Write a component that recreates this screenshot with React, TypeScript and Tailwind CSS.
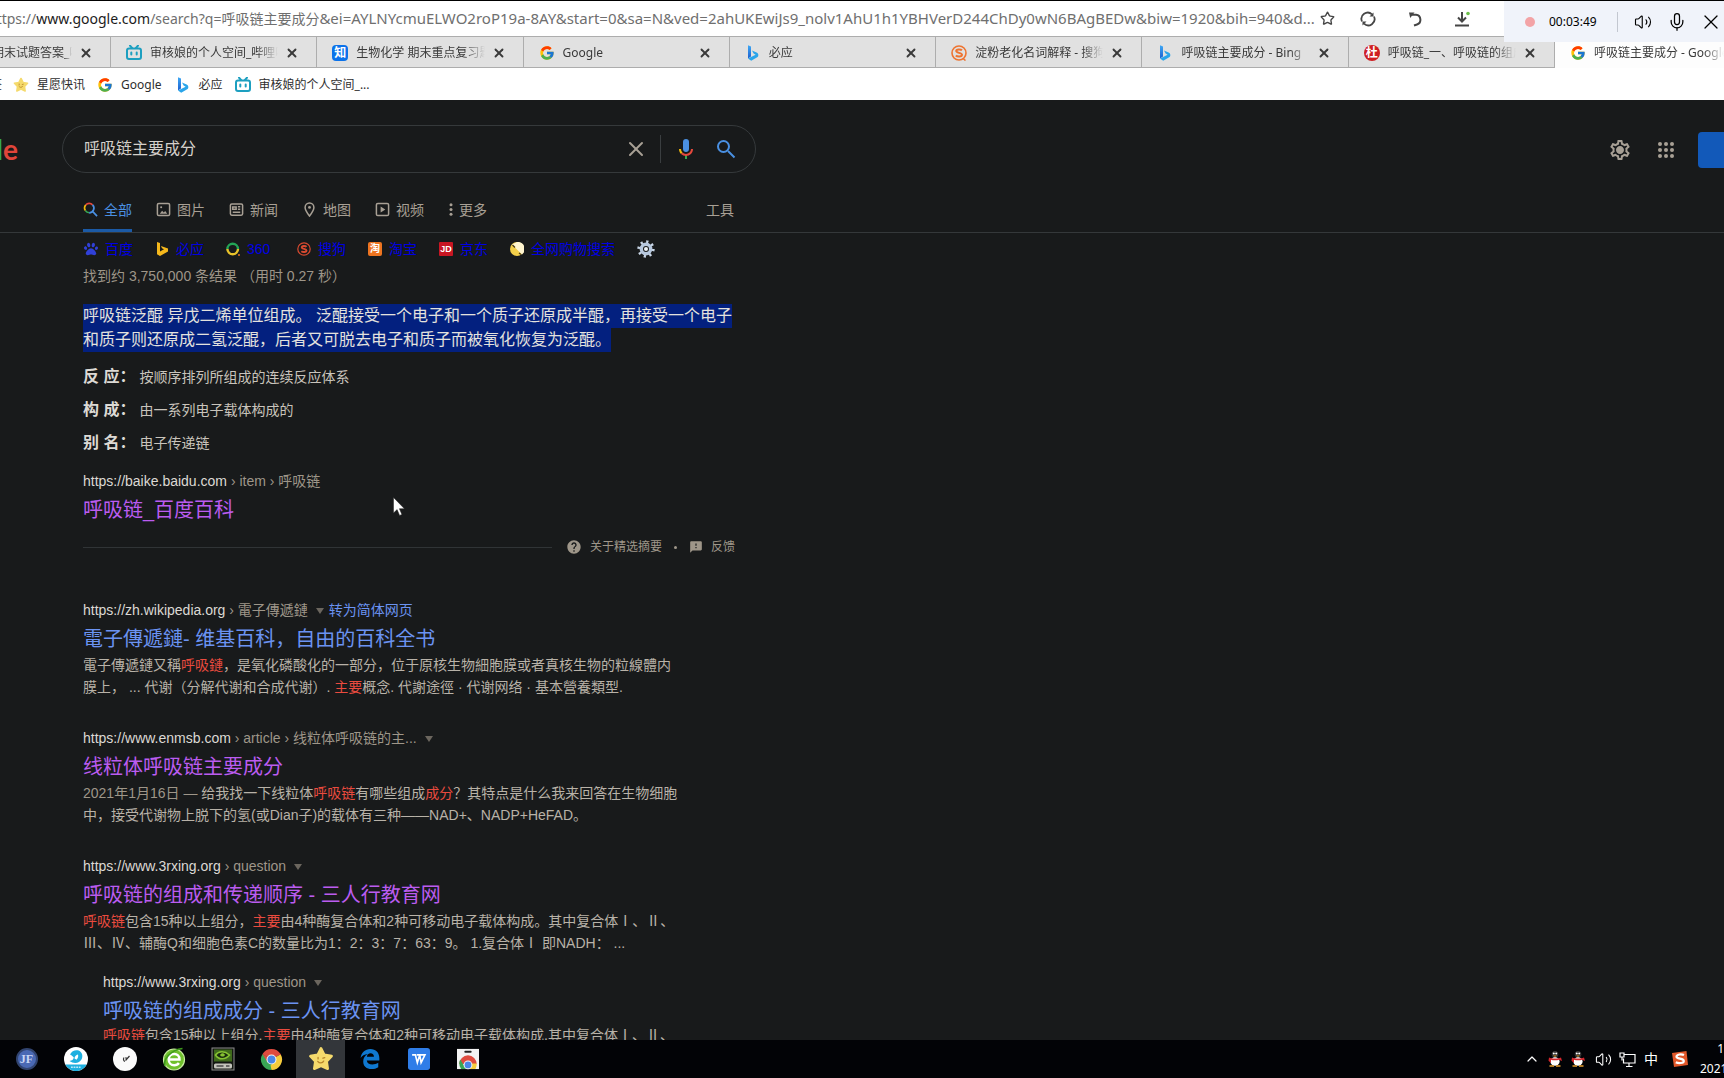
import React from 'react';
import { X, Mic, Volume2, Star, ChevronUp } from 'lucide-react';
import { FcGoogle } from 'react-icons/fc';
import { MdOutlineSettings, MdHelp, MdFeedback } from 'react-icons/md';
import { FaPaw } from 'react-icons/fa';

function BiliIcon() {
  return (
    <svg viewBox="0 0 16 16" className="size-4 shrink-0" fill="none" stroke="#1d9fc0" strokeWidth="2" aria-hidden="true">
      <rect x="1" y="3.6" width="14" height="10.4" rx="2" />
      <path d="M4 .6 6 3M12 .6 10 3" strokeLinecap="round" />
      <path d="M5.3 7.4v2.2M10.7 7.4v2.2" strokeLinecap="round" />
    </svg>
  );
}

function BingIcon() {
  return (
    <svg viewBox="0 0 16 16" className="size-4 shrink-0" aria-hidden="true">
      <defs>
        <linearGradient id="bingBlue" x1="0" y1="0" x2="0" y2="1">
          <stop offset="0" stopColor="#3fa9f5" />
          <stop offset="1" stopColor="#1b5fd0" />
        </linearGradient>
      </defs>
      <path d="M3 .3 6 1.500v10L3 13.600z" fill="url(#bingBlue)" />
      <path d="M3 13.400 6.200 15.700 12.600 12C14 10.600 13.400 8 11.600 7.400L7 5.400l1.600 3.200 2 1.100z" fill="#2aa5ea" />
    </svg>
  );
}

function ZhihuIcon() {
  return <span className="flex size-4 shrink-0 items-center justify-center rounded-sm bg-[#0b72ea] text-xs font-bold text-white">知</span>;
}

function SogouTabIcon() {
  return (
    <svg viewBox="0 0 16 16" className="size-4 shrink-0" fill="none" stroke="#ee7431" aria-hidden="true">
      <circle cx="8" cy="8" r="7" strokeWidth="1.600" />
      <path d="M11 5.300C9.800 4.200 5.200 4 5.200 6.100c0 2.200 5.800 1.300 5.800 3.700 0 2.200-4.800 2-6.200.7" strokeWidth="2" />
      <path d="M12 13.500l2.500 2" strokeWidth="1.600" />
    </svg>
  );
}

function DuIcon() {
  return <span className="flex size-4 shrink-0 items-center justify-center rounded-full bg-[#cf1f22] text-xs font-bold text-white">杜</span>;
}

function StarFace({ className }: { className: string }) {
  return (
    <svg viewBox="0 0 24 24" className={className} aria-hidden="true">
      <path
        d="M12 2.200 15 8.200 21.800 9.300 17.200 14.200 18.200 21 12 18.200 5.800 21 6.800 14.200 2.200 9.300 9 8.200z"
        fill="#f5da6c"
        stroke="#f5da6c"
        strokeWidth="2.400"
        strokeLinejoin="round"
      />
      <path d="M9.300 10.500v1.400M13.800 11.300l1.700-.5M9 14.200c1.500 2 4.500 2 5.500-.3" fill="none" stroke="#b8862a" strokeWidth="1.200" strokeLinecap="round" />
    </svg>
  );
}

const tabs = [
  { title: '审核娘的个人空间_哔哩哔', icon: <BiliIcon /> },
  { title: '生物化学 期末重点复习题', icon: <ZhihuIcon /> },
  { title: 'Google', icon: <FcGoogle className="size-4 shrink-0" /> },
  { title: '必应', icon: <BingIcon /> },
  { title: '淀粉老化名词解释 - 搜狗', icon: <SogouTabIcon /> },
  { title: '呼吸链主要成分 - Bing', icon: <BingIcon /> },
  { title: '呼吸链_一、呼吸链的组成', icon: <DuIcon /> },
];

function AddressBar() {
  return (
    <div className="flex h-9 shrink-0 items-center border-t border-black bg-white text-sm text-[#6f6f6f]">
      <div className="w-[1316px] shrink-0 overflow-hidden whitespace-nowrap">
        <span className="-ml-3">
          https://<span className="text-[#1c1c1c]">www.google.com</span>
          /search?q=呼吸链主要成分
          <span className="text-[15px]">
            &amp;ei=AYLNYcmuELWO2roP19a-8AY&amp;start=0&amp;sa=N&amp;ved=2ahUKEwiJs9_nolv1AhU1h1YBHVerD244ChDy0wN6BAgBEDw&amp;biw=1920&amp;bih=940&amp;d...
          </span>
        </span>
      </div>
      <div className="ml-1 flex items-center gap-[25px] text-[#454545]">
        <button aria-label="收藏"><Star className="size-[15px]" strokeWidth={2.2} /></button>
        <button aria-label="刷新">
          <svg viewBox="0 0 16 16" className="size-4" fill="none" stroke="currentColor" strokeWidth="1.800" aria-hidden="true">
            <path d="M2 10.500A6.300 6.300 0 0 1 12 3.300M14 5.500A6.300 6.300 0 0 1 4 12.700" />
            <path d="M13.500 1.500v4h-4zM2.500 14.500v-4h4z" fill="currentColor" stroke="none" />
          </svg>
        </button>
        <button aria-label="撤销" className="ml-1.5">
          <svg viewBox="0 0 16 16" className="size-4" fill="none" stroke="currentColor" strokeWidth="2" aria-hidden="true">
            <path d="M4.500 3.800H9a5 5 0 0 1 1 9.700L7 14.500" />
            <path d="M2 1.500h5.500L3.200 7z" fill="currentColor" stroke="none" />
          </svg>
        </button>
        <button aria-label="下载" className="ml-1.5">
          <svg viewBox="0 0 16 16" className="size-4" fill="none" stroke="currentColor" strokeWidth="2" aria-hidden="true">
            <path d="M8 1v9M4 6.500l4 4 4-4M1 14.500h14" />
            <circle cx="14" cy="2.500" r="1.800" fill="#6cc04a" stroke="none" />
          </svg>
        </button>
      </div>
    </div>
  );
}

function CloseTab() {
  return (
    <button aria-label="关闭标签页" className="ml-[7px]">
      <X className="size-3.5" strokeWidth={3.2} />
    </button>
  );
}

function TabStrip() {
  return (
    <div className="flex h-8 shrink-0 overflow-hidden bg-[#fdfdfd] text-xs text-[#3a3a3a]">
      <div className="flex w-[111px] shrink-0 items-center border-y border-r border-[#adadad] bg-[#e1e1e1] pt-0.5">
        <span className="-ml-2 w-20 shrink-0 overflow-hidden whitespace-nowrap [mask-image:linear-gradient(to_right,black_90%,transparent)]">
          期末试题答案_哔
        </span>
        <CloseTab />
      </div>
      <div className="flex w-[1444px] shrink-0">
        {tabs.map((tab) => (
          <div key={tab.title} className="flex min-w-0 flex-1 items-center border-y border-r border-[#adadad] bg-[#e1e1e1] pt-0.5 pr-[17px] pl-[15px]">
            {tab.icon}
            <span className="ml-2 min-w-0 flex-1 overflow-hidden whitespace-nowrap [mask-image:linear-gradient(to_right,black_84%,transparent)]">
              {tab.title}
            </span>
            <CloseTab />
          </div>
        ))}
      </div>
      <div className="flex min-w-0 flex-1 items-center bg-[#fdfdfd] pt-0.5 pl-[15px]">
        <FcGoogle className="size-4 shrink-0" />
        <span className="ml-2 overflow-hidden whitespace-nowrap [mask-image:linear-gradient(to_right,black_84%,transparent)]">
          呼吸链主要成分 - Google 搜索
        </span>
      </div>
    </div>
  );
}

function Bookmarks() {
  return (
    <nav aria-label="书签" className="flex h-8 shrink-0 items-center overflow-hidden bg-white pt-0.5 text-xs text-[#2e2e2e]">
      <span className="flex w-0.5 shrink-0 justify-end overflow-hidden">签</span>
      <a href="#" className="ml-[11px] flex items-center gap-2"><StarFace className="size-4" />星愿快讯</a>
      <a href="#" className="ml-3 flex items-center gap-2"><FcGoogle className="size-4" />Google</a>
      <a href="#" className="ml-[13px] flex items-center gap-2"><BingIcon />必应</a>
      <a href="#" className="ml-3 flex items-center gap-2"><BiliIcon />审核娘的个人空间_...</a>
    </nav>
  );
}

function Recorder() {
  return (
    <div className="absolute top-px right-0 flex h-[41px] w-[220px] items-center bg-[#f0f3fa] text-black">
      <span className="ml-[21px] size-2.5 rounded-full bg-[#f3a3a6]" />
      <span className="ml-3.5 w-12 text-xs">00:03:49</span>
      <span className="ml-5 h-5 w-px bg-[#c3c7d0]" />
      <button aria-label="声音" className="ml-4"><Volume2 className="size-[18px]" strokeWidth={1.5} /></button>
      <button aria-label="麦克风" className="ml-[15px]"><Mic className="size-5" strokeWidth={1.5} /></button>
      <button aria-label="关闭" className="ml-3"><X className="size-6" strokeWidth={1.2} /></button>
    </div>
  );
}

function SearchHeader() {
  return (
    <header className="flex items-center pt-[25px]">
      <div className="w-[62px] shrink-0">
        <a href="#" aria-label="Google" className="flex w-[18px] justify-end overflow-hidden font-['Lato',sans-serif] text-[28px] leading-9 font-bold">
          <span className="text-[#36a853]">l</span>
          <span className="text-[#e0453a]">e</span>
        </a>
      </div>
      <form className="flex h-12 w-[694px] items-center rounded-full border border-[#35393b] pr-[17px] pl-[21px]">
        <input aria-label="搜索" defaultValue="呼吸链主要成分" className="min-w-0 flex-1 bg-transparent text-base text-[#d4d0ca] outline-none" />
        <button type="button" aria-label="清除"><X className="size-6 text-[#a8a095]" strokeWidth={2} /></button>
        <span className="mr-[13px] ml-3 h-7 w-px bg-[#3a3e40]" />
        <button type="button" aria-label="语音搜索">
          <svg viewBox="0 0 24 24" className="size-6" aria-hidden="true">
            <path d="M12 15c1.700 0 3-1.300 3-3V5a3 3 0 0 0-6 0v7c0 1.700 1.300 3 3 3z" fill="#4a90e2" />
            <path d="M11 18.100h2V22h-2z" fill="#35a853" />
            <path d="M7 12H5c0 1.900.8 3.700 2 5l1.500-1.400A5 5 0 0 1 7 12z" fill="#f0b90b" />
            <path d="M12 17a5 5 0 0 1-3.500-1.400L7 17a7 7 0 0 0 5 2c3.900 0 7-3.100 7-7h-2a5 5 0 0 1-5 5z" fill="#e5483c" />
          </svg>
        </button>
        <button type="button" aria-label="Google 搜索" className="ml-4">
          <svg viewBox="0 0 24 24" className="size-6" aria-hidden="true" fill="none" stroke="#4a90e2" strokeWidth="2">
            <circle cx="9.500" cy="9.500" r="5.500" />
            <path d="m14 14 6.500 6.500" />
          </svg>
        </button>
      </form>
      <div className="ml-auto flex items-center pt-0.5 text-[#a8a095]">
        <button aria-label="设置" className="grid place-items-center">
          <MdOutlineSettings className="col-start-1 row-start-1 size-6" />
          <span className="col-start-1 row-start-1 size-1.5 rounded-full bg-[#a8a095]" />
        </button>
        <button aria-label="Google 应用" className="ml-[26px] grid grid-cols-3 gap-0.5">
          {Array.from({ length: 9 }, (_, i) => (
            <span key={i} className="size-1 rounded-full bg-[#a8a095]" />
          ))}
        </button>
        <button aria-label="登录" className="ml-6 h-9 w-[26px] rounded-l bg-[#1259b9]" />
      </div>
    </header>
  );
}

const line = { fill: 'none', stroke: 'currentColor', strokeWidth: 1.6 } as const;

function Categories() {
  const item = 'flex h-11 items-center gap-1.5 border-b-[3px] border-transparent pt-0.5';
  return (
    <div className="border-b border-[#34383a] pt-[15px] pl-[83px]">
      <div className="flex w-[651px] items-center gap-6 text-sm text-[#a8a095]">
        <a href="#" className="flex h-11 items-center gap-1.5 border-b-[3px] border-[#1b5aa6] pt-0.5 text-[#4a90e2]">
          <svg viewBox="0 0 16 16" className="size-[15px]" fill="none" strokeWidth="1.800" aria-hidden="true">
            <path d="M2.600 9.200A5 5 0 0 1 3 3.100" stroke="#f0b90b" />
            <path d="M3 3.100A5 5 0 0 1 10.200 3" stroke="#e5483c" />
            <path d="M2.600 9.200a5 5 0 0 0 4 2.300" stroke="#35a853" />
            <path d="M10.200 3a5 5 0 0 1-3.600 8.500M10.200 10l4.800 5" stroke="#4a90e2" />
          </svg>
          全部
        </a>
        <a href="#" className={item}>
          <svg viewBox="0 0 16 16" className="size-[15px]" {...line} aria-hidden="true">
            <rect x="1.500" y="1.500" width="13" height="13" rx="1.500" />
            <path d="M4 12.500l2.500-3.300 1.800 2 1.500-1.500 2.200 2.800z" fill="currentColor" stroke="none" />
            <circle cx="5.500" cy="5.500" r="1.100" fill="currentColor" stroke="none" />
          </svg>
          图片
        </a>
        <a href="#" className={item}>
          <svg viewBox="0 0 16 16" className="size-[15px]" {...line} aria-hidden="true">
            <rect x="1.500" y="2" width="13" height="12" rx="1.500" />
            <path d="M4 5.200h3.600v2.600H4zM9.500 5h2.500M9.500 7.800H12M4 10.800h8" />
          </svg>
          新闻
        </a>
        <a href="#" className={item}>
          <svg viewBox="0 0 16 16" className="size-[15px]" {...line} aria-hidden="true">
            <path d="M8 15C5 11 3.300 8.500 3.300 5.800a4.700 4.700 0 0 1 9.400 0C12.700 8.500 11 11 8 15z" />
            <circle cx="8" cy="5.800" r="1.500" fill="currentColor" stroke="none" />
          </svg>
          地图
        </a>
        <a href="#" className={item}>
          <svg viewBox="0 0 16 16" className="size-[15px]" {...line} aria-hidden="true">
            <rect x="1.500" y="1.500" width="13" height="13" rx="1.500" />
            <path d="M6 4.800v6.400L11 8z" fill="currentColor" stroke="none" />
          </svg>
          视频
        </a>
        <button className="flex h-11 items-center gap-1.5 border-b-[3px] border-transparent pt-0.5 pl-px">
          <svg viewBox="0 0 4 16" className="h-[15px] w-1" fill="currentColor" aria-hidden="true">
            <circle cx="2" cy="3" r="1.600" /><circle cx="2" cy="8" r="1.600" /><circle cx="2" cy="13" r="1.600" />
          </svg>
          更多
        </button>
        <button className="ml-auto h-11 border-b-[3px] border-transparent pt-0.5">工具</button>
      </div>
    </div>
  );
}

const engines = [
  {
    name: '百度',
    icon: <FaPaw className="size-3.5 text-[#3040d8]" />,
  },
  {
    name: '必应',
    icon: <svg viewBox="0 0 14 14" className="size-3.5" aria-hidden="true"><path d="M2 0l3 1v8.500L9 7.300 7 6.300 6 4l7 2.600v3L5 14l-3-1.800z" fill="#f5b81c" /></svg>,
  },
  {
    name: '360',
    icon: (
      <svg viewBox="0 0 14 14" className="size-3.5" fill="none" strokeWidth="2.400" aria-hidden="true">
        <path d="M1.400 7a5.300 5.300 0 0 1 10.600 0" stroke="#23a455" /><path d="M12 7A5.300 5.300 0 0 1 1.400 7" stroke="#e8c22a" /><circle cx="13" cy="13" r=".9" fill="#f08020" stroke="none" />
      </svg>
    ),
  },
  {
    name: '搜狗',
    icon: (
      <svg viewBox="0 0 14 14" className="size-3.5" fill="none" stroke="#d94a30" aria-hidden="true">
        <circle cx="7" cy="7" r="6.200" strokeWidth="1.200" /><path d="M9.500 4.800C8.500 3.600 4.800 3.600 4.800 5.400c0 1.900 4.700 1.200 4.700 3.200 0 1.800-3.800 1.800-5.200.6" strokeWidth="1.900" />
      </svg>
    ),
  },
  { name: '淘宝', icon: <span className="flex size-3.5 items-center justify-center rounded-[2px] bg-[#ee7420] text-[10px] font-bold text-white">淘</span> },
  { name: '京东', icon: <span className="flex size-3.5 items-center justify-center rounded-[1px] bg-[#c81623] text-[9px] font-bold text-white">JD</span> },
  {
    name: '全网购物搜索',
    icon: <svg viewBox="0 0 14 14" className="size-3.5" aria-hidden="true"><circle cx="7" cy="7" r="7" fill="#f3cf4a" /><path d="M2 2.500 12 12.500A7 7 0 0 0 7 0z" fill="#fff5cf" /><path d="M2.500 3 5 5.500M9 11l2 1.500" stroke="#4a3a10" strokeWidth="1.300" /></svg>,
  },
];

function Engines() {
  return (
    <div className="flex h-8 items-center gap-[22px] pl-px text-sm text-[#0000e4]">
      {engines.map((e) => (
        <a key={e.name} href="#" className="flex min-w-[49px] items-center gap-[7px]">{e.icon}{e.name}</a>
      ))}
      <button aria-label="搜索引擎设置">
        <svg viewBox="0 0 18 18" className="size-[18px]" aria-hidden="true">
          <circle cx="9" cy="9" r="7.200" fill="none" stroke="#c9d6e6" strokeWidth="3" strokeDasharray="2.200 3.450" />
          <circle cx="9" cy="9" r="4.700" fill="none" stroke="#b7c8de" strokeWidth="3.400" />
          <circle cx="9" cy="9" r="2" fill="#eef3f8" />
        </svg>
      </button>
    </div>
  );
}

function Caret() {
  return (
    <svg viewBox="0 0 8 6" className="ml-2 inline-block h-1.5 w-2 align-middle" fill="#6b665e" aria-hidden="true"><path d="M0 0h8L4 6z" /></svg>
  );
}

function Cite({ host, path, children }: { host: string; path: string; children?: React.ReactNode }) {
  return (
    <div className="text-sm leading-5 whitespace-nowrap text-[#9e9689]">
      <span className="text-[#dcd9d4]">{host}</span> {path}
      {children}
    </div>
  );
}

function Title({ visited, children }: { visited?: boolean; children: React.ReactNode }) {
  return (
    <h3 className={visited ? 'mt-1.5 text-xl leading-[26px] whitespace-nowrap text-[#bb5cf0]' : 'mt-1.5 text-xl leading-[26px] whitespace-nowrap text-[#6b93f2]'}>
      <a href="#">{children}</a>
    </h3>
  );
}

const Hit = ({ children }: { children: string }) => <em className="text-[#e94b3f] not-italic">{children}</em>;

const facts = [
  ['反 应：', '按顺序排列所组成的连续反应体系'],
  ['构 成：', '由一系列电子载体构成的'],
  ['别 名：', '电子传递链'],
];

function Results() {
  const desc = 'mt-0.5 text-sm leading-[22px] whitespace-nowrap text-[#b8b2a8]';
  return (
    <div className="ml-[83px] w-[652px]">
      <Engines />
      <p className="text-sm leading-[22px] text-[#9e9689]">找到约 3,750,000 条结果 （用时 0.27 秒）</p>

      <section>
        <p className="mt-[17px] text-base leading-6 whitespace-nowrap text-[#e4e2de]">
          <span className="inline-block bg-[#03207f]">呼吸链泛醌 异戊二烯单位组成。 泛醌接受一个电子和一个质子还原成半醌，再接受一个电子</span>
          <br />
          <span className="inline-block bg-[#03207f]">和质子则还原成二氢泛醌，后者又可脱去电子和质子而被氧化恢复为泛醌。</span>
        </p>
        <dl className="mt-2">
          {facts.map(([k, v]) => (
            <div key={k} className="flex h-[33px] items-center gap-1">
              <dt className="text-base font-bold text-[#dcd9d4]">{k}</dt>
              <dd className="text-sm text-[#c9c4bc]">{v}</dd>
            </div>
          ))}
        </dl>
        <div className="mt-3">
          <Cite host="https://baike.baidu.com" path="› item › 呼吸链" />
          <Title visited>呼吸链_百度百科</Title>
        </div>
        <div className="mt-3.5 flex h-5 items-center text-xs text-[#9e9689]">
          <span className="mr-3.5 h-px flex-1 bg-[#303436]" />
          <a href="#" className="flex items-center gap-2"><MdHelp className="size-4" />关于精选摘要</a>
          <span className="mx-3 size-[3px] rounded-full bg-[#9e9689]" />
          <a href="#" className="flex items-center gap-2"><MdFeedback className="size-3.5" />反馈</a>
        </div>
      </section>

      <div className="mt-[43px] flex flex-col gap-[30px]">
        <article>
          <Cite host="https://zh.wikipedia.org" path="› 電子傳遞鏈">
            <Caret />
            <a href="#" className="ml-[5px] text-[#6b93f2]">转为简体网页</a>
          </Cite>
          <Title>電子傳遞鏈- 维基百科，自由的百科全书</Title>
          <p className={desc}>
            電子傳遞鏈又稱<Hit>呼吸鏈</Hit>，是氧化磷酸化的一部分，位于原核生物細胞膜或者真核生物的粒線體内
            <br />
            膜上， ... 代谢（分解代谢和合成代谢）. <Hit>主要</Hit>概念. 代謝途徑 · 代谢网络 · 基本營養類型.
          </p>
        </article>
        <article>
          <Cite host="https://www.enmsb.com" path="› article › 线粒体呼吸链的主..."><Caret /></Cite>
          <Title visited>线粒体呼吸链主要成分</Title>
          <p className={desc}>
            <span className="text-[#9e9689]">2021年1月16日 — </span>
            给我找一下线粒体<Hit>呼吸链</Hit>有哪些组成<Hit>成分</Hit>？其特点是什么我来回答在生物细胞
            <br />
            中，接受代谢物上脱下的氢(或Dian子)的载体有三种——NAD+、NADP+HeFAD。
          </p>
        </article>
        <article>
          <Cite host="https://www.3rxing.org" path="› question"><Caret /></Cite>
          <Title visited>呼吸链的组成和传递顺序 - 三人行教育网</Title>
          <p className={desc}>
            <Hit>呼吸链</Hit>包含15种以上组分，<Hit>主要</Hit>由4种酶复合体和2种可移动电子载体构成。其中复合体Ⅰ、Ⅱ、
            <br />
            Ⅲ、Ⅳ、辅酶Q和细胞色素C的数量比为1：2：3：7：63：9。 1.复合体Ⅰ 即NADH： ...
          </p>
        </article>
      </div>
      <article className="mt-[18px] ml-5">
        <Cite host="https://www.3rxing.org" path="› question"><Caret /></Cite>
        <Title>呼吸链的组成成分 - 三人行教育网</Title>
        <p className="text-sm leading-[22px] whitespace-nowrap text-[#b8b2a8]">
          <Hit>呼吸链</Hit>包含15种以上组分,<Hit>主要</Hit>由4种酶复合体和2种可移动电子载体构成.其中复合体Ⅰ、Ⅱ、
        </p>
      </article>
    </div>
  );
}

function ChromeIcon({ className }: { className: string }) {
  return (
    <svg viewBox="0 0 24 24" className={className} aria-hidden="true">
      <path d="M12 12 2.470 6.500A11 11 0 0 1 21.530 6.500z" fill="#df4b3f" />
      <path d="M12 12 21.530 6.500A11 11 0 0 1 12 23z" fill="#f6cc3d" />
      <path d="M12 12V23A11 11 0 0 1 2.470 6.500z" fill="#3aa655" />
      <path d="M12 7h9.800l-.4-.9H12zM7.700 14.500 2.600 6.300 12 12z" fill="#df4b3f" />
      <path d="M16.300 14.500 12 23l-1-5z" fill="#f6cc3d" />
      <circle cx="12" cy="12" r="5.200" fill="#f4f4f4" />
      <circle cx="12" cy="12" r="4.100" fill="#4a86e8" />
    </svg>
  );
}

const apps = [
  {
    name: 'JF',
    icon: <span className="flex size-[22px] items-center justify-center rounded-full border-2 border-[#31446f] bg-[#4a69b4] font-['Liberation_Serif',serif] text-xs font-bold text-[#c9d6f5]">JF</span>,
  },
  {
    name: '鸟',
    icon: (
      <svg viewBox="0 0 24 24" className="size-6" aria-hidden="true">
        <circle cx="12" cy="12" r="12" fill="#fff" />
        <path d="M6 7.500C8 3.200 13.500 2 16.500 4.800c3.200 3 2 8.200-1.500 10.200-2.600 1.400-6.500 1.200-9.500-1 2.500-.3 4-1.500 4.300-3.500C8.500 9 7.500 8.200 6 7.500z" fill="#1eb0e0" />
        <path d="M10.500 11.500c0-2 1.500-3.500 3.500-4 .5 1.500 0 4-1.500 5.200z" fill="#fff" />
        <path d="M1.500 17.500h21C20.500 21.500 16.500 24 12 24S3.500 21.500 1.500 17.500z" fill="#1eb0e0" />
        <path d="M7 20.300h10" stroke="#b9e9f7" strokeWidth="1.500" strokeDasharray="1.800 .8" />
      </svg>
    ),
  },
  {
    name: '工具',
    icon: (
      <svg viewBox="0 0 24 24" className="size-6" aria-hidden="true">
        <circle cx="12" cy="12" r="12" fill="#fafafa" />
        <path d="M11 10.500c-1 1.500-.5 3.500 1 4M12.500 13.500 16.500 9M12 11h2" stroke="#333" strokeWidth="1.200" fill="none" />
      </svg>
    ),
  },
  {
    name: '浏览器',
    icon: (
      <svg viewBox="0 0 24 24" className="size-6" aria-hidden="true">
        <circle cx="12" cy="12.500" r="10.500" fill="#6fc02c" stroke="#c8eda0" strokeWidth="1.200" />
        <path d="M6.500 12.500h11c0-3.500-2.300-5.500-5.300-5.500-3.200 0-5.500 2.300-5.500 5.500s2.300 5.700 5.500 5.700c2 0 3.800-.8 4.700-2.200" fill="none" stroke="#fff" strokeWidth="2.400" />
        <path d="M3 19C1 13 8 3 20.500 1.500" fill="none" stroke="#3f9a1c" strokeWidth="1.600" />
      </svg>
    ),
  },
  {
    name: 'NVIDIA',
    icon: (
      <svg viewBox="0 0 24 24" className="size-6" aria-hidden="true">
        <rect x="1" y="1" width="22" height="22" fill="#141812" stroke="#8c8c8c" />
        <rect x="3" y="2.500" width="18" height="12" fill="#3f6a1c" />
        <path d="M4.500 8c3-4 9-4.500 14 0-4 5-11 5-14 0z" fill="#1c2c10" stroke="#86c232" strokeWidth="1.600" />
        <path d="M9 8c1.500-2.500 4-2 5 0-1.200 2-3.800 2-5 0z" fill="#86c232" />
        <rect x="3" y="16.500" width="18" height="5" rx="1.500" fill="#c4c4bc" />
        <path d="M5.500 19h7M15 19h3.500" stroke="#4a4a4a" strokeWidth="1.500" />
      </svg>
    ),
  },
  { name: 'Chrome', icon: <ChromeIcon className="size-[23px]" /> },
  { name: '星愿', icon: <StarFace className="size-[26px]" />, active: true },
  {
    name: 'Edge',
    icon: (
      <svg viewBox="0 0 24 24" className="size-[22px]" aria-hidden="true">
        <path d="M1.800 10.800C2.500 5 6.700 1.200 12.400 1.200c6 0 9.800 4 9.800 10v2.300H8.500c.2 3 2.800 4.500 6 4.500 2.400 0 4.600-.7 6.500-1.800v4.700C19 22.200 16.500 23 13.700 23 8.200 23 4.600 19.800 4.600 14.700c0-3.600 1.900-6.600 5-8.100-3.700.3-6.400 2-7.800 4.200zM8.600 9.500h7.700c0-2.300-1.400-3.700-3.700-3.700-2.200 0-3.700 1.500-4 3.700z" fill="#0f78d0" />
      </svg>
    ),
  },
  {
    name: 'WPS',
    icon: (
      <svg viewBox="0 0 24 24" className="size-[22px]" aria-hidden="true">
        <rect width="24" height="24" rx="3" fill="#2f7de8" />
        <path d="M4.500 7.500H8l2.200 8.500 2.600-8.500 1.500 8.500L18.500 7.500h-9" fill="none" stroke="#fff" strokeWidth="1.800" />
      </svg>
    ),
  },
  {
    name: 'Chrome 应用',
    icon: (
      <svg viewBox="0 0 24 24" className="size-[22px]" aria-hidden="true">
        <path d="M0 1h24v22H0z" fill="#f3f3f3" /><rect x="8" y="3" width="8" height="2.200" rx="1" fill="#222" />
        <path d="M2.500 17.500a9.500 9.500 0 0 1 19 0z" fill="#df4b3f" /><path d="M2.500 17c0-2 .4-3 1-4.500L10 23H4.500a9 9 0 0 1-2-6z" fill="#3aa655" /><path d="M13 17h8.500c0 2.500-.5 4.500-1.500 6h-8z" fill="#f6cc3d" />
        <circle cx="12" cy="18.500" r="4.800" fill="#f4f4f4" /><circle cx="12" cy="18.500" r="3.700" fill="#4a86e8" />
      </svg>
    ),
  },
];

function Penguin() {
  return (
    <svg viewBox="0 0 16 16" className="size-4" aria-hidden="true">
      <ellipse cx="8" cy="3.300" rx="3" ry="3" fill="#222" stroke="#555" strokeWidth=".5" />
      <circle cx="6.800" cy="2.400" r="1" fill="#fff" /><circle cx="9.200" cy="2.400" r="1" fill="#fff" />
      <path d="M6 4.500h4L8 5.800z" fill="#f0a020" />
      <ellipse cx="8" cy="10.500" rx="4.600" ry="4.300" fill="#fff" />
      <path d="M2 6.500c3 1.400 9 1.400 12 0l1 3.500-3-1.300c-2 .8-6 .8-8 0V12L1.500 9.800z" fill="#d3262c" />
      <path d="M2.500 15h4.500M9 15h4.500" stroke="#e8a030" strokeWidth="1.600" />
    </svg>
  );
}

function Taskbar() {
  return (
    <footer className="flex h-[38px] shrink-0 items-center overflow-hidden bg-[#020306] pl-0.5 text-white">
      {apps.map((a) => (
        <button key={a.name} aria-label={a.name} className={a.active ? 'flex h-full w-[49px] items-center justify-center bg-[#33363a]' : 'flex h-full w-[49px] items-center justify-center'}>
          {a.icon}
        </button>
      ))}
      <div className="ml-auto flex h-full items-center gap-[7px]">
        <ChevronUp className="size-4" strokeWidth={1.8} />
        <Penguin />
        <Penguin />
        <Volume2 className="ml-0.5 size-[17px]" strokeWidth={1.5} />
        <svg viewBox="0 0 17 16" className="size-[17px]" fill="none" stroke="#fff" strokeWidth="1.200" aria-hidden="true">
          <path d="M5.500 3H16v8.500H4.500V7M10 11.500V15M7 15h6.500M1 1.500h4v4H1zM3 5.500V9" />
        </svg>
        <span className="pl-px text-sm">中</span>
        <svg viewBox="0 0 18 18" className="ml-1.5 size-[18px]" aria-hidden="true">
          <path d="M1 3 15.500 1 17 15 3 17z" fill="#e2582a" />
          <path d="M13 5C10.500 3.800 5.500 4.200 5.500 6.700c0 2.400 7.300 1.500 7.300 4.200 0 2.500-5.500 2.700-8 1.300" fill="none" stroke="#fff" strokeWidth="2.200" />
        </svg>
        <div className="ml-1 w-6 overflow-hidden text-xs leading-5 whitespace-nowrap">
          <div className="text-right">1</div>
          <div>2021</div>
        </div>
      </div>
    </footer>
  );
}

export default function App() {
  return (
    <div lang="zh-CN" className="relative flex h-screen flex-col overflow-hidden bg-[#181a1b] font-['Noto_Sans','Noto_Sans_CJK_SC',sans-serif]">
      <AddressBar />
      <TabStrip />
      <Bookmarks />
      <Recorder />
      <main className="relative min-h-0 flex-1 overflow-hidden font-['Liberation_Sans','Noto_Sans_CJK_SC',sans-serif]">
        <SearchHeader />
        <Categories />
        <Results />
        <svg viewBox="0 0 12 19" className="absolute top-[397px] left-[393px] h-[19px] w-3" fill="#fff" stroke="#222" strokeWidth=".5" aria-hidden="true">
          <path d="M.5.500v15.500l3.600-3.400 2.500 5.800 2.300-1-2.500-5.700h5z" />
        </svg>
      </main>
      <Taskbar />
    </div>
  );
}
